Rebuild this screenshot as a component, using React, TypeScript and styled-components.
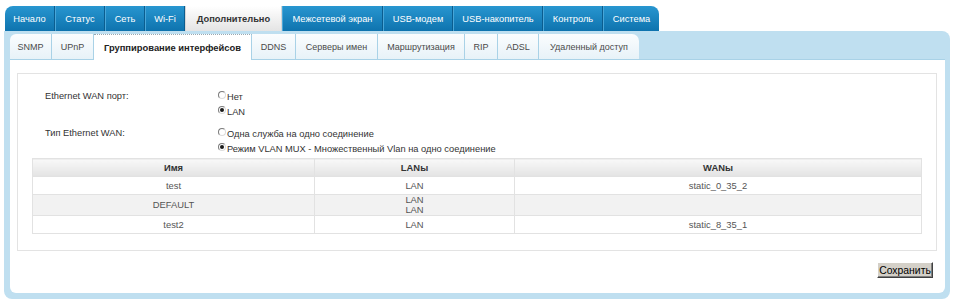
import React from 'react';
import styled, { createGlobalStyle, css } from 'styled-components';

const GlobalStyle = createGlobalStyle`
  body {
    margin: 0;
    background: #ffffff;
    font-family: "Liberation Sans", Arial, sans-serif;
  }
`;

const navItems = [
  { label: 'Начало', w: 50 },
  { label: 'Статус', w: 50 },
  { label: 'Сеть', w: 40 },
  { label: 'Wi-Fi', w: 40 },
  { label: 'Дополнительно', w: 97, active: true },
  { label: 'Межсетевой экран', w: 101 },
  { label: 'USB-модем', w: 70 },
  { label: 'USB-накопитель', w: 90 },
  { label: 'Контроль', w: 60 },
  { label: 'Система', w: 56 },
];

const subItems = [
  { label: 'SNMP', w: 42 },
  { label: 'UPnP', w: 42 },
  { label: 'Группирование интерфейсов', w: 158, active: true },
  { label: 'DDNS', w: 44 },
  { label: 'Серверы имен', w: 82 },
  { label: 'Маршрутизация', w: 87 },
  { label: 'RIP', w: 33 },
  { label: 'ADSL', w: 41 },
  { label: 'Удаленный доступ', w: 100 },
];

const groups = [
  { name: 'test', lans: ['LAN'], wans: 'static_0_35_2' },
  { name: 'DEFAULT', lans: ['LAN', 'LAN'], wans: '' },
  { name: 'test2', lans: ['LAN'], wans: 'static_8_35_1' },
];

const Page = styled.div`
  width: 946px;
  padding: 6px 0 0 4px;
`;

const TopNav = styled.div`
  display: flex;
  height: 25px;
  padding-left: 1px;
`;

const NavTab = styled.div<{ $w: number; $active?: boolean; $first?: boolean; $last?: boolean }>`
  box-sizing: border-box;
  width: ${(p) => p.$w}px;
  display: flex;
  align-items: center;
  justify-content: center;
  font-size: 9.3px;
  color: #ffffff;
  background: linear-gradient(#2896d0, #0e73ae);
  border-left: 1px solid #48a6d8;
  border-right: 1px solid #0b5d8f;
  ${(p) => p.$first && css`border-top-left-radius: 8px; border-left: none;`}
  ${(p) => p.$last && css`border-top-right-radius: 8px; border-right: none;`}
  ${(p) =>
    p.$active &&
    css`
      background: linear-gradient(#ffffff, #e4e4e4);
      color: #333333;
      font-weight: bold;
      border-color: #d6d6d6;
    `}
`;

const Panel = styled.div`
  background: #bfdff0;
  border-radius: 0 8px 8px 8px;
  padding: 2px 5px 6px 6px;
`;

const SubNav = styled.div`
  display: flex;
  height: 27px;
  border-bottom: 1px solid #a9d2e7;
  box-sizing: border-box;
`;

const SubTab = styled.div<{ $w: number; $active?: boolean; $first?: boolean; $last?: boolean }>`
  box-sizing: border-box;
  width: ${(p) => p.$w}px;
  margin-top: 1px;
  display: flex;
  align-items: center;
  justify-content: center;
  font-size: 9px;
  color: #4a4a4a;
  background: linear-gradient(#fbfdfe, #e7f2f8);
  border-right: 1px solid #a9d2e7;
  ${(p) => p.$first && css`border-top-left-radius: 6px;`}
  ${(p) => p.$last && css`border-top-right-radius: 7px; border-right: none;`}
  ${(p) =>
    p.$active &&
    css`
      background: #ffffff;
      color: #222222;
      font-size: 9.4px;
      font-weight: bold;
      border-top: 1px dotted #9aa8b0;
      margin-bottom: -1px;
    `}
`;

const Content = styled.div`
  background: #ffffff;
  border-radius: 0 0 6px 6px;
  padding: 13px 8px 15px 7px;
  display: flex;
  flex-direction: column;
`;

const Box = styled.div`
  border: 1px solid #e3e3e3;
  padding: 16px 14px 16px 14px;
`;

const Form = styled.div`
  display: flex;
  flex-direction: column;
  gap: 8px;
  padding-left: 13px;
`;

const FormRow = styled.div`
  display: grid;
  grid-template-columns: 172px 1fr;
  font-size: 9.3px;
  color: #333333;
  line-height: 13.5px;
`;

const Label = styled.div``;

const Options = styled.div`
  display: flex;
  flex-direction: column;
`;

const Option = styled.label`
  display: flex;
  align-items: flex-start;
  gap: 1px;
  margin-left: 1px;
`;

const Radio = styled.span<{ $checked?: boolean }>`
  box-sizing: border-box;
  width: 8px;
  height: 8px;
  margin-top: 1px;
  border-radius: 50%;
  border: 1px solid;
  border-color: #7b7b7b #dcdcdc #dcdcdc #7b7b7b;
  background: #ffffff;
  display: flex;
  align-items: center;
  justify-content: center;

  &::after {
    content: '';
    width: 4px;
    height: 4px;
    border-radius: 50%;
    background: ${(p) => (p.$checked ? '#1a1a1a' : 'transparent')};
  }
`;

const OptionText = styled.span`
  margin-top: 1px;
`;

const Table = styled.table`
  margin-top: 2px;
  width: 100%;
  border-collapse: collapse;
  font-size: 9.4px;
  color: #555555;
  table-layout: fixed;
`;

const Th = styled.th<{ $w?: number }>`
  width: ${(p) => (p.$w ? `${p.$w}px` : 'auto')};
  height: 17px;
  padding: 0;
  border: 1px solid #e2e2e2;
  background: linear-gradient(#f8f8f8, #e3e3e3);
  color: #333333;
  font-weight: bold;
  text-align: center;
`;

const Tr = styled.tr<{ $alt?: boolean }>`
  background: ${(p) => (p.$alt ? '#f2f2f2' : '#ffffff')};
`;

const Td = styled.td`
  height: 17px;
  padding: 0;
  border: 1px solid #e2e2e2;
  text-align: center;
  line-height: 10px;
`;

const Footer = styled.div`
  display: flex;
  justify-content: flex-end;
  padding: 11px 4px 0 0;
`;

const Button = styled.button`
  box-sizing: border-box;
  width: 56px;
  height: 16px;
  padding: 0;
  font-family: "Liberation Sans", Arial, sans-serif;
  font-size: 10.4px;
  color: #000000;
  background: #d4d0c8;
  border: 1px solid;
  border-color: #ffffff #404040 #404040 #ffffff;
  box-shadow: inset -1px -1px #808080;
`;

export default function App() {
  return (
    <Page>
      <GlobalStyle />
      <TopNav>
        {navItems.map((t, i) => (
          <NavTab key={t.label} $w={t.w} $active={t.active} $first={i === 0} $last={i === navItems.length - 1}>
            {t.label}
          </NavTab>
        ))}
      </TopNav>
      <Panel>
        <SubNav>
          {subItems.map((t, i) => (
            <SubTab key={t.label} $w={t.w} $active={t.active} $first={i === 0} $last={i === subItems.length - 1}>
              {t.label}
            </SubTab>
          ))}
        </SubNav>
        <Content>
          <Box>
            <Form>
              <FormRow>
                <Label>Ethernet WAN порт:</Label>
                <Options>
                  <Option>
                    <Radio />
                    <OptionText>Нет</OptionText>
                  </Option>
                  <Option>
                    <Radio $checked />
                    <OptionText>LAN</OptionText>
                  </Option>
                </Options>
              </FormRow>
              <FormRow>
                <Label>Тип Ethernet WAN:</Label>
                <Options>
                  <Option>
                    <Radio />
                    <OptionText>Одна служба на одно соединение</OptionText>
                  </Option>
                  <Option>
                    <Radio $checked />
                    <OptionText>Режим VLAN MUX - Множественный Vlan на одно соединение</OptionText>
                  </Option>
                </Options>
              </FormRow>
            </Form>
            <Table>
              <thead>
                <tr>
                  <Th $w={281}>Имя</Th>
                  <Th $w={199}>LANы</Th>
                  <Th>WANы</Th>
                </tr>
              </thead>
              <tbody>
                {groups.map((g, i) => (
                  <Tr key={g.name} $alt={i % 2 === 1}>
                    <Td>{g.name}</Td>
                    <Td>
                      {g.lans.map((l, j) => (
                        <div key={j}>{l}</div>
                      ))}
                    </Td>
                    <Td>{g.wans}</Td>
                  </Tr>
                ))}
              </tbody>
            </Table>
          </Box>
          <Footer>
            <Button>Сохранить</Button>
          </Footer>
        </Content>
      </Panel>
    </Page>
  );
}
